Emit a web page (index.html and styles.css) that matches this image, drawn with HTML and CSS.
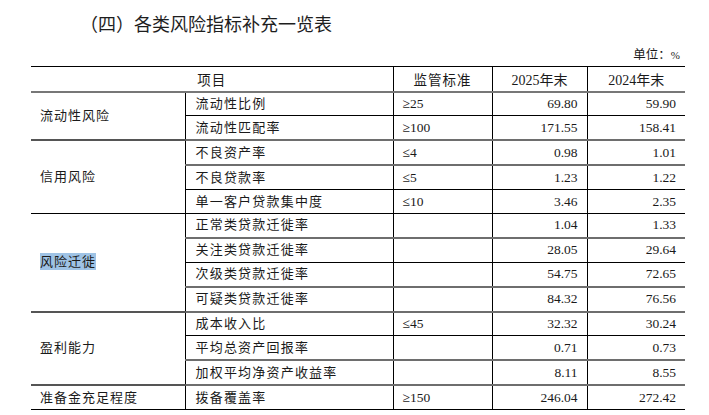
FILE: index.html
```html
<!DOCTYPE html>
<html lang="zh-CN">
<head>
<meta charset="utf-8">
<title>各类风险指标补充一览表</title>
<link rel="stylesheet" href="styles.css">
</head>
<body>
<div class="wrap">
  <h1 class="title">（四）各类风险指标补充一览表</h1>
  <div class="unit">单位：<span class="num">%</span></div>
  <table class="tbl">
    <colgroup>
      <col class="c1"><col class="c2"><col class="c3"><col class="c4"><col class="c5">
    </colgroup>
    <thead>
      <tr>
        <th colspan="2">项目</th>
        <th>监管标准</th>
        <th class="yr">2025年末</th>
        <th class="yr">2024年末</th>
      </tr>
    </thead>
    <tbody>
      <tr class="g">
        <td class="grp" rowspan="2">流动性风险</td>
        <td class="sub">流动性比例</td><td class="std">≥25</td><td class="n">69.80</td><td class="n">59.90</td>
      </tr>
      <tr>
        <td class="sub">流动性匹配率</td><td class="std">≥100</td><td class="n">171.55</td><td class="n">158.41</td>
      </tr>
      <tr class="g">
        <td class="grp" rowspan="3">信用风险</td>
        <td class="sub">不良资产率</td><td class="std">≤4</td><td class="n">0.98</td><td class="n">1.01</td>
      </tr>
      <tr class="g">
        <td class="sub">不良贷款率</td><td class="std">≤5</td><td class="n">1.23</td><td class="n">1.22</td>
      </tr>
      <tr>
        <td class="sub">单一客户贷款集中度</td><td class="std">≤10</td><td class="n">3.46</td><td class="n">2.35</td>
      </tr>
      <tr>
        <td class="grp" rowspan="4"><span class="sel">风险迁徙</span></td>
        <td class="sub">正常类贷款迁徙率</td><td class="std"></td><td class="n">1.04</td><td class="n">1.33</td>
      </tr>
      <tr class="g">
        <td class="sub">关注类贷款迁徙率</td><td class="std"></td><td class="n">28.05</td><td class="n">29.64</td>
      </tr>
      <tr>
        <td class="sub">次级类贷款迁徙率</td><td class="std"></td><td class="n">54.75</td><td class="n">72.65</td>
      </tr>
      <tr class="g">
        <td class="sub">可疑类贷款迁徙率</td><td class="std"></td><td class="n">84.32</td><td class="n">76.56</td>
      </tr>
      <tr class="g">
        <td class="grp" rowspan="3">盈利能力</td>
        <td class="sub">成本收入比</td><td class="std">≤45</td><td class="n">32.32</td><td class="n">30.24</td>
      </tr>
      <tr>
        <td class="sub">平均总资产回报率</td><td class="std"></td><td class="n">0.71</td><td class="n">0.73</td>
      </tr>
      <tr class="g">
        <td class="sub">加权平均净资产收益率</td><td class="std"></td><td class="n">8.11</td><td class="n">8.55</td>
      </tr>
      <tr class="g last">
        <td class="grp">准备金充足程度</td>
        <td class="sub">拨备覆盖率</td><td class="std">≥150</td><td class="n">246.04</td><td class="n">272.42</td>
      </tr>
    </tbody>
  </table>
</div>
</body>
</html>
```

FILE: styles.css
```css
html, body {
  margin: 0;
  padding: 0;
  background: #ffffff;
}

body {
  font-family: "Liberation Serif", "Noto Sans CJK SC", serif;
  color: #1a1a1a;
}

.wrap {
  width: 654px;
  margin-left: 31px;
  padding-top: 14px;
}

.title {
  margin: 0;
  padding-left: 49px;
  font-family: "Noto Sans CJK SC", sans-serif;
  font-weight: 400;
  font-size: 18px;
  line-height: 18px;
  color: #1e1e1e;
}

.unit {
  margin-top: 16px;
  padding-right: 5px;
  text-align: right;
  font-family: "Liberation Serif", "Noto Sans CJK SC", serif;
  font-size: 12.5px;
  line-height: 14px;
  height: 18px;
}

.unit .num {
  font-size: 11px;
}

.tbl {
  width: 654px;
  border-collapse: collapse;
  table-layout: fixed;
  font-size: 13px;
}

.c1 { width: 154px; }
.c2 { width: 208px; }
.c3 { width: 99px; }
.c4 { width: 95px; }
.c5 { width: 98px; }

.tbl th {
  font-weight: 400;
  height: 23.5px;
  padding: 0;
  text-align: center;
  border-top: 1px solid #000;
  border-bottom: 2px solid #777;
  font-size: 13.5px;
  letter-spacing: 1px;
}

.tbl th.yr {
  letter-spacing: 0;
  font-size: 14px;
}

.tbl th + th {
  border-left: 1px solid #000;
}

.tbl td {
  height: 22.9px;
  padding: 0;
  border-top: 1px solid #000;
  vertical-align: middle;
  line-height: 16px;
  white-space: nowrap;
}

.tbl tr.g td {
  border-top: 2px solid #6e6e6e;
}

.tbl tr.g td.grp {
  border-top-color: #555;
}

.tbl tr.last td {
  border-bottom: 1px solid #000;
}

.tbl td.grp {
  padding-left: 9px;
  letter-spacing: 1px;
  border-right: 1px solid #000;
}

.tbl td.sub {
  padding-left: 10px;
  letter-spacing: 1.2px;
  border-right: 1px solid #000;
}

.tbl td.std {
  padding-left: 9px;
  font-size: 13.5px;
  border-right: 1px solid #000;
}

.tbl td.n {
  text-align: right;
  padding-right: 9px;
  font-size: 13.5px;
}

.tbl td.n + td.n {
  border-left: 1px solid #000;
}

.sel {
  background: #9fc3e5;
  padding: 1px 0;
}
```
